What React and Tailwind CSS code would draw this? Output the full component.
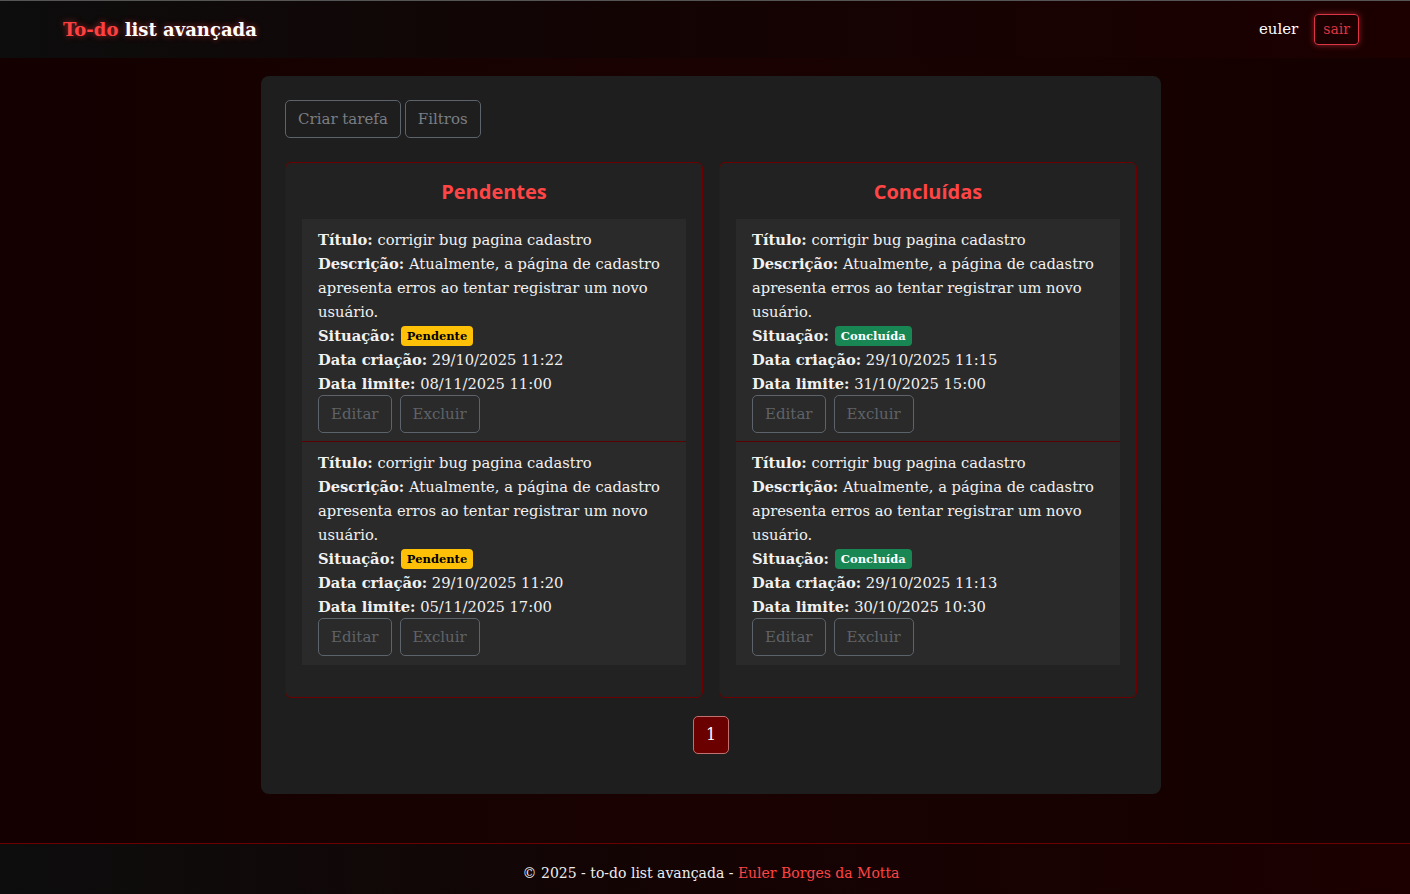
const serif = { fontFamily: '"DejaVu Serif", "Liberation Serif", serif' }

const TASKS = {
  pendentes: [
    { criacao: '29/10/2025 11:22', limite: '08/11/2025 11:00' },
    { criacao: '29/10/2025 11:20', limite: '05/11/2025 17:00' },
  ],
  concluidas: [
    { criacao: '29/10/2025 11:15', limite: '31/10/2025 15:00' },
    { criacao: '29/10/2025 11:13', limite: '30/10/2025 10:30' },
  ],
}

function TaskItem({ task, done }) {
  return (
    <div className="bg-[#2a2a2a] border-b border-[#5a0000] last:border-b-transparent px-4 pt-[9px] pb-2 text-[14.7px] leading-6 text-[#f1f1f1]">
      <div><b>Título:</b> corrigir bug pagina cadastro</div>
      <div><b>Descrição:</b> Atualmente, a página de cadastro apresenta erros ao tentar registrar um novo usuário.</div>
      <div className="flex items-center gap-1">
        <b>Situação:</b>
        {done ? (
          <span className="ml-0.5 rounded-[4px] bg-[#198754] px-[6px] text-[11.5px] leading-5 font-bold text-white">Concluída</span>
        ) : (
          <span className="ml-0.5 rounded-[4px] bg-[#ffc107] px-[6px] text-[11.5px] leading-5 font-bold text-black">Pendente</span>
        )}
      </div>
      <div><b>Data criação:</b> {task.criacao}</div>
      <div><b>Data limite:</b> {task.limite}</div>
      <div className="flex gap-2 mt-[-1px]">
        <button className="h-[38px] px-3 rounded-[5px] border border-[#5c636a] text-[#5f6368] text-[15px]">Editar</button>
        <button className="h-[38px] px-3 rounded-[5px] border border-[#5c636a] text-[#5f6368] text-[15px]">Excluir</button>
      </div>
    </div>
  )
}

function Column({ title, tasks, done }) {
  return (
    <div className="rounded-[6px] border border-[#6b0000] bg-[#222222] px-4 pt-[15px] pb-8">
      <h2 className="text-center text-[20px] leading-7 font-bold text-[#ff4545] mb-[13px]" style={{ fontFamily: '"Open Sans", "Noto Sans", sans-serif' }}>
        {title}
      </h2>
      {tasks.map((t, i) => (
        <TaskItem key={i} task={t} done={done} />
      ))}
    </div>
  )
}

export default function App() {
  return (
    <div className="min-h-[894px] flex flex-col bg-[linear-gradient(90deg,#140000,#1a0202_50%,#140000)]" style={serif}>
      {/* header */}
      <header className="h-[58px] border-t border-[#555] flex items-center justify-between pl-[63px] pr-[51px] bg-[linear-gradient(90deg,#0d0d0d,#120404_40%,#1c0000)]">
        <h1 className="text-[18px] font-bold text-white [text-shadow:0_0_6px_rgba(255,60,60,0.6)]">
          <span className="text-[#ff4040]">To-do</span> list avançada
        </h1>
        <div className="flex items-center gap-4">
          <span className="text-white text-[15px]">euler</span>
          <button className="h-[31px] px-2 rounded-[4px] border border-[#dc3545] text-[#dc3545] text-[14px] shadow-[0_0_6px_rgba(220,53,69,0.6)]">sair</button>
        </div>
      </header>

      {/* main */}
      <main className="flex-1 flex justify-center pl-3 pt-[18px] pb-[49px]">
        <div className="w-[900px] rounded-[8px] bg-[#1e1e1e] p-6 pb-10">
          <div className="flex gap-1 mb-6">
            <button className="h-[38px] px-3 rounded-[5px] border border-[#5c636a] text-[#7a7f85] text-[15px]">Criar tarefa</button>
            <button className="h-[38px] px-3 rounded-[5px] border border-[#5c636a] text-[#7a7f85] text-[15px]">Filtros</button>
          </div>
          <div className="grid grid-cols-2 gap-4">
            <Column title="Pendentes" tasks={TASKS.pendentes} done={false} />
            <Column title="Concluídas" tasks={TASKS.concluidas} done />
          </div>
          <div className="flex justify-center mt-[18px]">
            <button className="w-9 h-[38px] rounded-[5px] border border-[#c07070] bg-[#6b0000] text-white text-[16px]">1</button>
          </div>
        </div>
      </main>

      {/* footer */}
      <footer className="h-[52px] border-t border-[#6b0000] flex items-center justify-center pl-3 pt-2 text-[14px] text-[#eeeeee] bg-[linear-gradient(90deg,#0d0d0d,#140303_50%,#1c0000)]">
        © 2025 - to-do list avançada -&nbsp;<span className="text-[#ff4545]">Euler Borges da Motta</span>
      </footer>
    </div>
  )
}
